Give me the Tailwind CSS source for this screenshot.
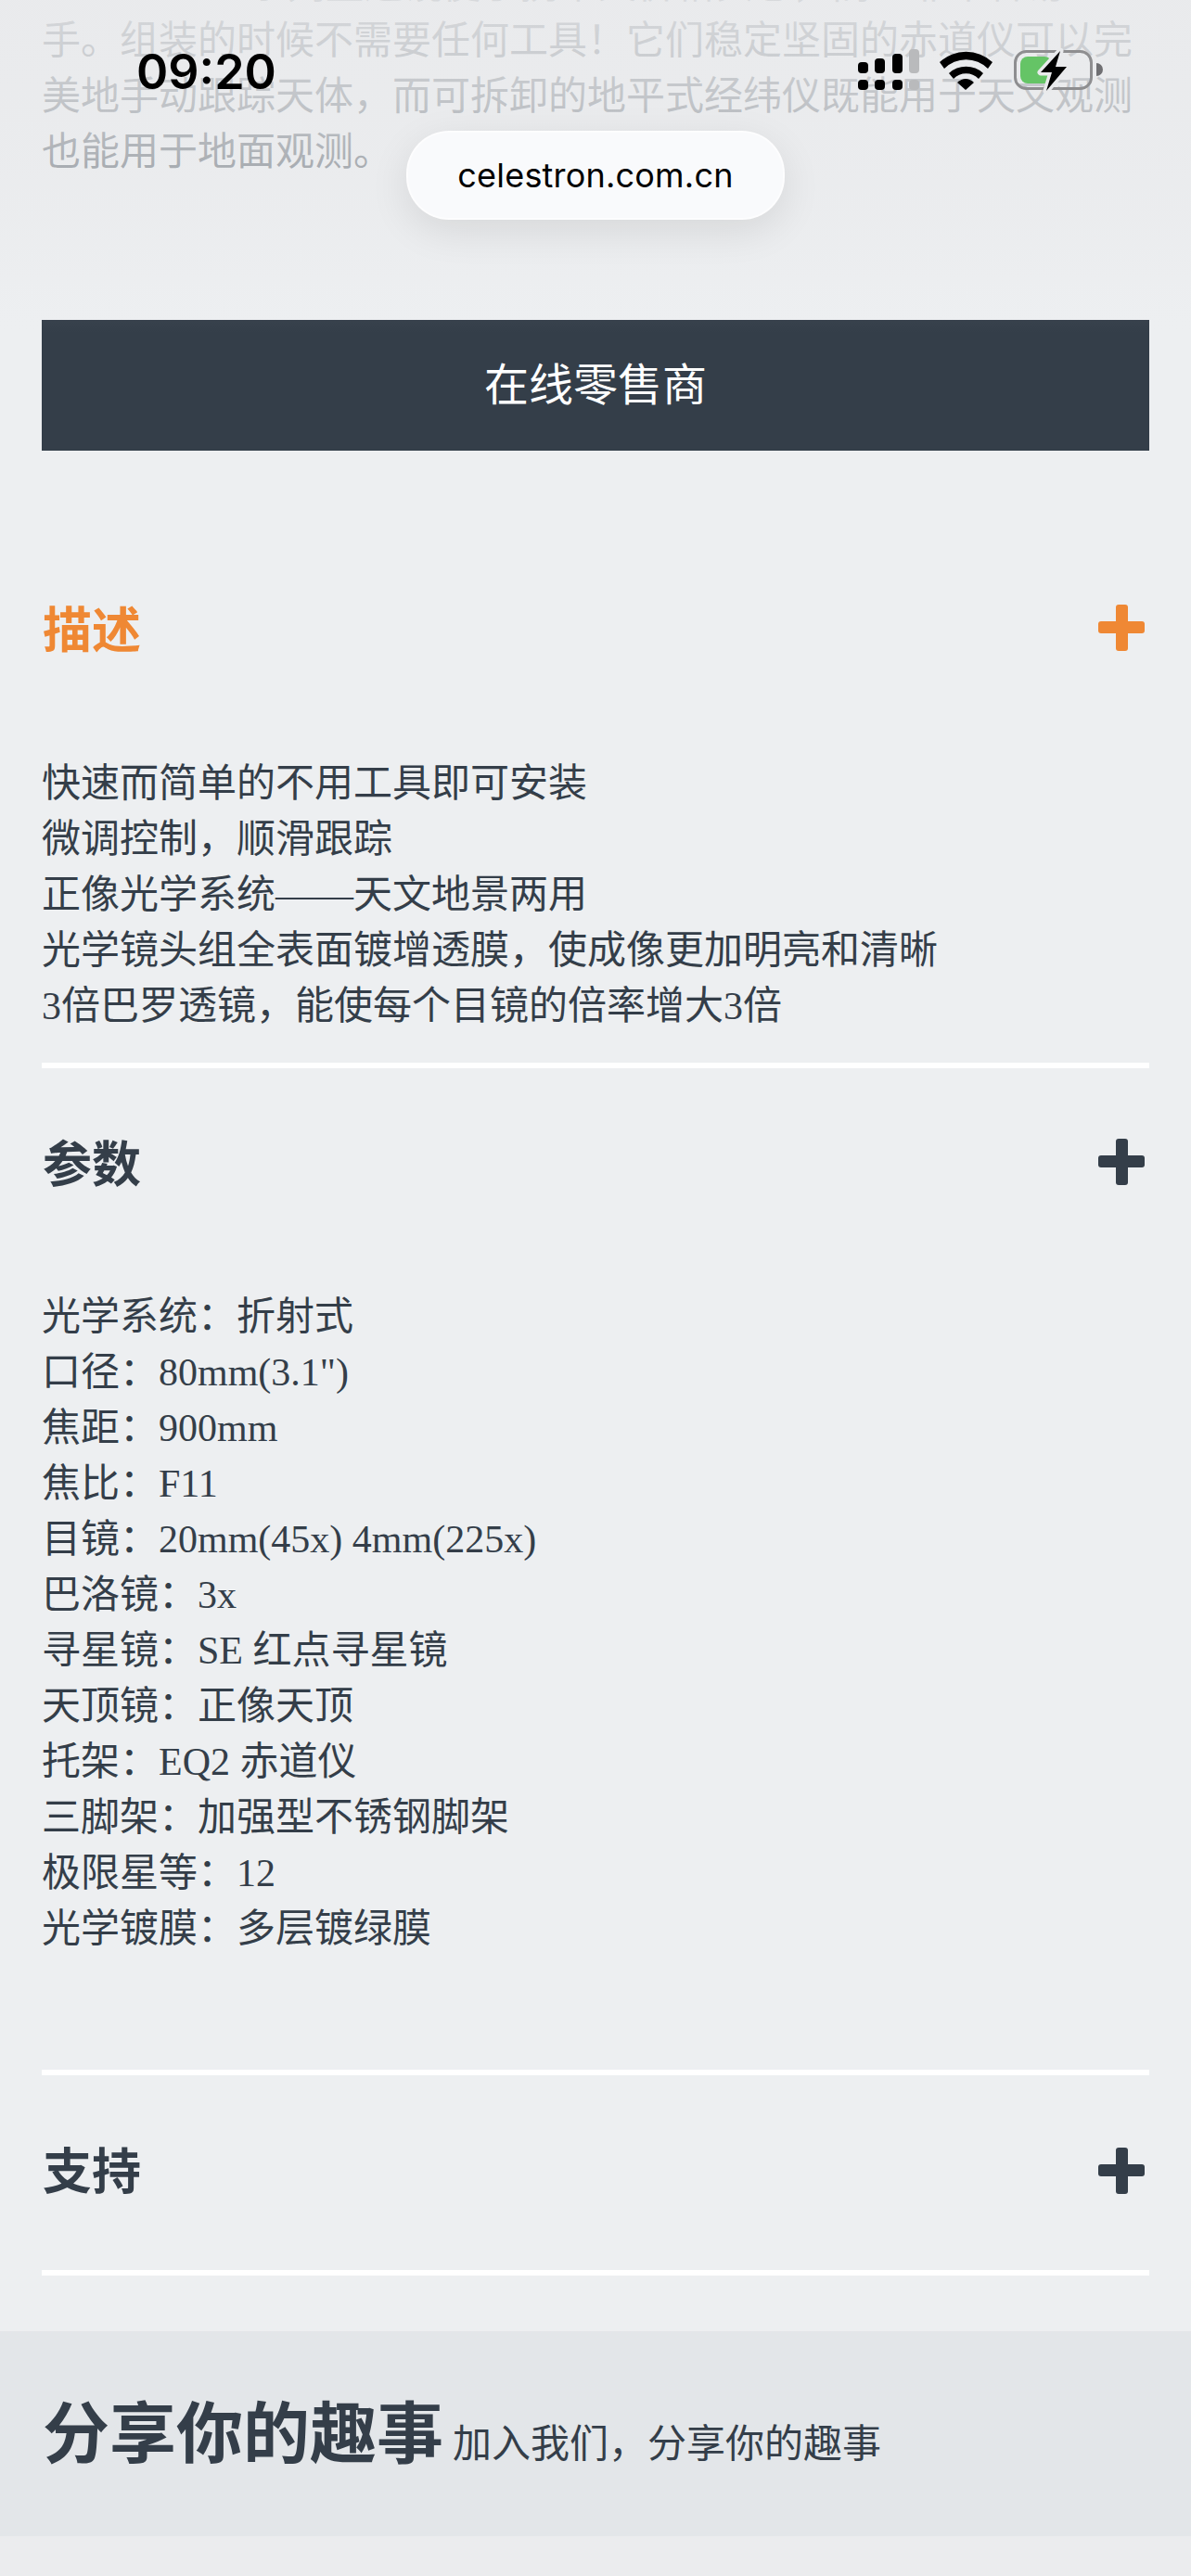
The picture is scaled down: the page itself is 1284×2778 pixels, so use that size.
<!doctype html>
<html lang="zh">
<head>
<meta charset="utf-8">
<script src="https://cdn.jsdelivr.net/npm/@tailwindcss/browser@4"></script>
<title>celestron.com.cn</title>
</head>
<body class="bg-[#edeff1]">
<div class="relative h-[2778px] w-[1284px] overflow-hidden bg-[#edeff1] text-[#343e49] font-[family-name:'Liberation_Serif','Noto_Sans_CJK_SC',serif]">
  <main>
    <p class="-mt-[46px] px-[45px] text-[42px] leading-[60px]">PowerSeeker系列望远镜便于携带又价格实惠，而且非常容易上手。组装的时候不需要任何工具！它们稳定坚固的赤道仪可以完美地手动跟踪天体，而可拆卸的地平式经纬仪既能用于天文观测也能用于地面观测。</p>

    <div class="mx-[45px] mt-[151px] flex h-[141px] items-center justify-center bg-[#343e49] text-[48px] text-white font-[family-name:'Liberation_Sans','Noto_Sans_CJK_SC',sans-serif]">在线零售商</div>

    <section class="mx-[45px] mt-[90px]">
      <div class="flex h-[206px] items-center justify-between pl-[1px] pr-[5px] text-[#ef8834]">
        <h2 class="mt-[3px] text-[53px] font-bold font-[family-name:'Liberation_Sans','Noto_Sans_CJK_SC',sans-serif]">描述</h2>
        <svg class="-mt-[4px]" width="50" height="50" viewBox="0 0 50 50" fill="currentColor"><rect x="19" width="13" height="50" rx="3"/><rect y="18" width="50" height="13" rx="3"/></svg>
      </div>
      <div class="pt-[33px] pb-[31px] text-[42px] leading-[60px]">
        <div>快速而简单的不用工具即可安装</div>
        <div>微调控制，顺滑跟踪</div>
        <div>正像光学系统——天文地景两用</div>
        <div>光学镜头组全表面镀增透膜，使成像更加明亮和清晰</div>
        <div>3倍巴罗透镜，能使每个目镜的倍率增大3倍</div>
      </div>
    </section>

    <div class="mx-[45px] h-[6px] bg-white"></div>

    <section class="mx-[45px]">
      <div class="flex h-[206px] items-center justify-between pl-[1px] pr-[5px]">
        <h2 class="mt-[3px] text-[53px] font-bold font-[family-name:'Liberation_Sans','Noto_Sans_CJK_SC',sans-serif]">参数</h2>
        <svg class="-mt-[4px]" width="50" height="50" viewBox="0 0 50 50" fill="currentColor"><rect x="19" width="13" height="50" rx="3"/><rect y="18" width="50" height="13" rx="3"/></svg>
      </div>
      <div class="pt-[32px] pb-[122px] text-[42px] leading-[60px]">
        <div>光学系统：折射式</div>
        <div>口径：80mm(3.1")</div>
        <div>焦距：900mm</div>
        <div>焦比：F11</div>
        <div>目镜：20mm(45x) 4mm(225x)</div>
        <div>巴洛镜：3x</div>
        <div>寻星镜：SE 红点寻星镜</div>
        <div>天顶镜：正像天顶</div>
        <div>托架：EQ2 赤道仪</div>
        <div>三脚架：加强型不锈钢脚架</div>
        <div>极限星等：12</div>
        <div>光学镀膜：多层镀绿膜</div>
      </div>
    </section>

    <div class="mx-[45px] h-[6px] bg-white"></div>

    <section class="mx-[45px] flex h-[210px] items-center justify-between pl-[1px] pr-[5px]">
      <h2 class="text-[53px] font-bold font-[family-name:'Liberation_Sans','Noto_Sans_CJK_SC',sans-serif]">支持</h2>
      <svg class="-mt-[4px]" width="50" height="50" viewBox="0 0 50 50" fill="currentColor"><rect x="19" width="13" height="50" rx="3"/><rect y="18" width="50" height="13" rx="3"/></svg>
    </section>

    <div class="mx-[45px] h-[6px] bg-white"></div>

    <section class="mt-[60px] flex h-[221px] items-center bg-[#e3e6e9] pl-[46px] font-[family-name:'Liberation_Sans','Noto_Sans_CJK_SC',sans-serif]">
      <h2 class="flex items-baseline text-[72px] font-bold">分享你的趣事<span class="ml-[10px] text-[42px] font-normal">加入我们，分享你的趣事</span></h2>
    </section>
  </main>

  <!-- browser chrome overlays -->
  <div class="pointer-events-none absolute inset-x-0 top-0 h-[360px] bg-[linear-gradient(to_bottom,rgba(233,234,236,0.9)_0px,rgba(233,234,236,0.85)_45px,rgba(233,234,236,0.79)_105px,rgba(233,234,236,0.68)_165px,rgba(233,234,236,0.5)_240px,rgba(233,234,236,0.12)_320px,rgba(233,234,236,0.02)_345px,rgba(233,234,236,0)_360px)]"></div>
  <div class="pointer-events-none absolute inset-x-0 bottom-0 h-[43px] bg-[#ebecee]"></div>

  <div class="absolute inset-x-0 top-[50px] flex h-[50px] items-center justify-between pl-[147px] pr-[94px]">
    <span class="mt-[5px] text-[52px] leading-[50px] font-semibold text-black font-[family-name:Inter,sans-serif]">09:20</span>
    <svg width="265" height="50" viewBox="925 50 265 50" aria-hidden="true">
      <g fill="#000">
        <rect x="925" y="67" width="11" height="12" rx="4"/><rect x="925" y="86" width="11" height="11" rx="4"/>
        <rect x="943" y="63" width="11" height="16" rx="4"/><rect x="943" y="86" width="11" height="11" rx="4"/>
        <rect x="962" y="58" width="11" height="21" rx="4"/><rect x="962" y="86" width="11" height="11" rx="4"/>
      </g>
      <g fill="#b9babc">
        <rect x="980" y="53" width="11" height="26" rx="4"/><rect x="980" y="86" width="11" height="11" rx="4"/>
      </g>
      <g fill="#000">
        <path d="M1013 67 A42 42 0 0 1 1070 67 L1065 74 A33 33 0 0 0 1018 74 Z"/>
        <path d="M1023 79 A27 27 0 0 1 1060 79 L1055 85 A19 19 0 0 0 1028 85 Z"/>
        <path d="M1032 89 Q1041 81 1050 89 L1041 97 Z"/>
      </g>
      <rect x="1094.5" y="55.5" width="82" height="40" rx="12" fill="none" stroke="#8e8e90" stroke-width="3"/>
      <rect x="1100" y="61" width="34" height="29" rx="8" fill="#65c466"/>
      <path d="M1143 55 L1122 78 L1134 78 L1128 98 L1150 72 L1138 72 Z" fill="#000" stroke="#e9eaec" stroke-width="7" stroke-linejoin="round" paint-order="stroke"/>
      <path d="M1182 68 A7 7 0 0 1 1182 82 Z" fill="#6f6f72"/>
    </svg>
  </div>

  <div class="absolute left-[438px] top-[141px] flex h-[96px] w-[408px] items-center justify-center rounded-[46px] border-2 border-white/60 bg-[#f9fafc] text-[36px] tracking-[0.2px] text-black shadow-[0_12px_44px_rgba(0,0,0,0.09)] font-[family-name:Inter,sans-serif]">celestron.com.cn</div>
</div>
</body>
</html>
